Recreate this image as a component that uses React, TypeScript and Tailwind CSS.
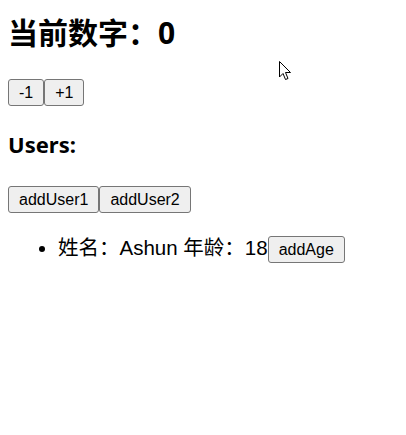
import { useState } from "react";

type User = { name: string; age: number };

const btn =
	"border border-[#767676] rounded-[3px] bg-[#efefef] px-[10px] py-[2px] text-[16px] leading-[21px] text-black font-['Liberation_Sans',sans-serif]";

export default function App() {
	const [count, setCount] = useState(0);
	const [users, setUsers] = useState<User[]>([{ name: "Ashun", age: 18 }]);

	return (
		<div className="relative w-[406px] h-[435px] bg-white px-[8px] text-black font-['Noto_Sans','Noto_Sans_CJK_SC',sans-serif]">
			<h1 className="pt-[15px] text-[30px] leading-[36px] font-bold">
				当前数字：{count}
			</h1>
			<div className="mt-[28px] flex">
				<button className={btn} onClick={() => setCount(count - 1)}>
					-1
				</button>
				<button className={btn} onClick={() => setCount(count + 1)}>
					+1
				</button>
			</div>

			<h3 className="mt-[24px] text-[22px] leading-[28px] font-bold">Users:</h3>
			<div className="mt-[28px] flex">
				<button
					className={btn}
					onClick={() => setUsers([...users, { name: "Tom", age: 20 }])}
				>
					addUser1
				</button>
				<button
					className={btn}
					onClick={() => setUsers([...users, { name: "Jerry", age: 22 }])}
				>
					addUser2
				</button>
			</div>

			<ul className="mt-[21px] list-disc pl-[50px] text-[20.5px] leading-[28px] font-['Liberation_Sans','Noto_Sans_CJK_SC',sans-serif]">
				{users.map((u, i) => (
					<li key={i}>
						姓名：{u.name} 年龄：{u.age}
						<button
							className={btn}
							onClick={() =>
								setUsers(users.map((x, j) => (j === i ? { ...x, age: x.age + 1 } : x)))
							}
						>
							addAge
						</button>
					</li>
				))}
			</ul>

			{/* mouse pointer from the capture */}
			<svg className="absolute left-[279px] top-[61px]" width="13" height="20" viewBox="0 0 13 20">
				<path
					d="M0.5 0.5 L0.5 16 L4 12.5 L6.5 18.5 L9 17.5 L6.5 11.5 L11.5 11.5 Z"
					fill="white"
					stroke="black"
					strokeWidth="1"
				/>
			</svg>
		</div>
	);
}
